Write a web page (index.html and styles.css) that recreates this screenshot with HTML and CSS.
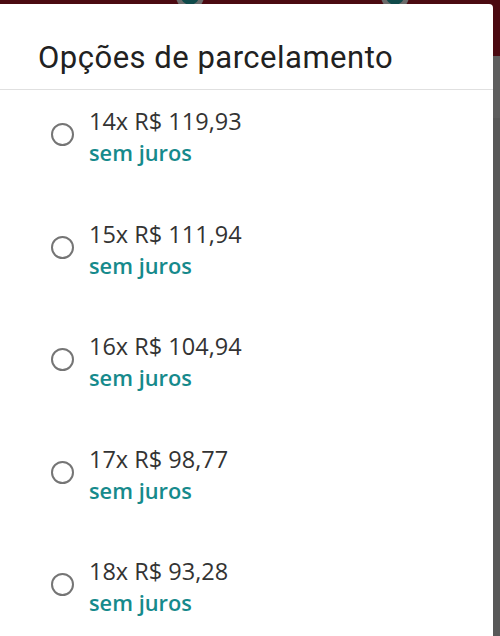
FILE: index.html
```html
<!DOCTYPE html>
<html lang="pt-BR">
<head>
    <meta charset="UTF-8" />
    <meta name="viewport" content="width=device-width, initial-scale=1.0" />
    <title>Opções de parcelamento</title>
    <link rel="stylesheet" href="styles.css">
</head>
<body>
    <div class="page">
        <div class="topbar">
            <span class="dot dot1"></span>
            <span class="dot dot2"></span>
        </div>
        <div class="band"></div>
    </div>
    <div class="modal">
        <h2 class="modalTitle">Opções de parcelamento</h2>
        <ul class="options">
            <li class="option">
                <span class="radio"></span>
                <div class="optionText">
                    <div class="price">14x R$ 119,93</div>
                    <div class="interest">sem juros</div>
                </div>
            </li>
            <li class="option">
                <span class="radio"></span>
                <div class="optionText">
                    <div class="price">15x R$ 111,94</div>
                    <div class="interest">sem juros</div>
                </div>
            </li>
            <li class="option">
                <span class="radio"></span>
                <div class="optionText">
                    <div class="price">16x R$ 104,94</div>
                    <div class="interest">sem juros</div>
                </div>
            </li>
            <li class="option">
                <span class="radio"></span>
                <div class="optionText">
                    <div class="price">17x R$ 98,77</div>
                    <div class="interest">sem juros</div>
                </div>
            </li>
            <li class="option">
                <span class="radio"></span>
                <div class="optionText">
                    <div class="price">18x R$ 93,28</div>
                    <div class="interest">sem juros</div>
                </div>
            </li>
        </ul>
    </div>
</body>
</html>
```

FILE: styles.css
```css
html, body {
    margin: 0;
    padding: 0;
    height: 100%;
    overflow: hidden;
}
body {
    background: #585858;
    font-family: "Open Sans", "Noto Sans", sans-serif;
}
.topbar {
    position: relative;
    height: 56px;
    background: #4b0a11;
}
.band {
    height: 62px;
    background: #5e5e5e;
}
.dot {
    position: absolute;
    top: -18px;
    width: 18px;
    height: 18px;
    border-radius: 50%;
    background: #0f4a4a;
    border: 5px solid #6a6a6a;
}
.dot1 { left: 176px; }
.dot2 { left: 381px; }
.modal {
    position: absolute;
    top: 4px;
    left: 0;
    width: 493px;
    bottom: 0;
    overflow: hidden;
    background: #ffffff;
    border-radius: 0 4px 0 0;
}
.modalTitle {
    margin: 0;
    padding: 34px 0 0 38px;
    height: 51px;
    font-family: Roboto, sans-serif;
    font-weight: 400;
    font-size: 31px;
    line-height: 40px;
    letter-spacing: 0.5px;
    color: #212121;
    border-bottom: 1px solid #e0e0e0;
}
.options {
    list-style: none;
    margin: 0;
    padding: 16px 0 0 0;
}
.option {
    display: flex;
    align-items: flex-start;
    gap: 15px;
    height: 112.5px;
}
.radio {
    flex: none;
    width: 19px;
    height: 19px;
    margin: 17px 0 0 51px;
    border: 2.5px solid #757575;
    border-radius: 50%;
}
.price {
    font-size: 23.5px;
    line-height: 31px;
    color: #333333;
}
.interest {
    font-size: 21.8px;
    font-weight: 600;
    line-height: 32px;
    color: #168a8c;
}
```
